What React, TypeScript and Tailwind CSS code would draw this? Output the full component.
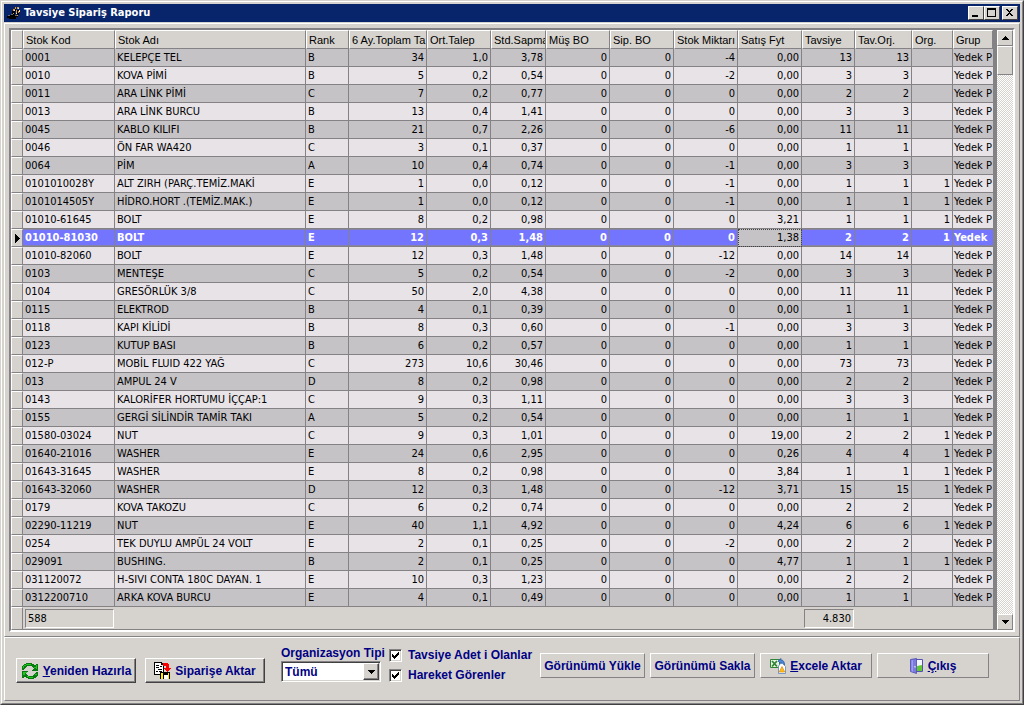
import { useState } from "react";
import type { ReactNode } from "react";
import { clsx } from "clsx";

interface StockRow {
  code: string;
  name: string;
  rank: string;
  // total, average, deviation, customer BO, order BO, stock, price, suggested, original, org
  values: string[];
}

const row = (
  code: string,
  name: string,
  rank: string,
  values: string
): StockRow => ({ code, name, rank, values: values.split(" ") });

const rows: StockRow[] = [
  row("0001", "KELEPÇE TEL", "B", "34 1,0 3,78 0 0 -4 0,00 13 13"),
  row("0010", "KOVA PİMİ", "B", "5 0,2 0,54 0 0 -2 0,00 3 3"),
  row("0011", "ARA LİNK PİMİ", "C", "7 0,2 0,77 0 0 0 0,00 2 2"),
  row("0013", "ARA LİNK BURCU", "B", "13 0,4 1,41 0 0 0 0,00 3 3"),
  row("0045", "KABLO KILIFI", "B", "21 0,7 2,26 0 0 -6 0,00 11 11"),
  row("0046", "ÖN FAR WA420", "C", "3 0,1 0,37 0 0 0 0,00 1 1"),
  row("0064", "PİM", "A", "10 0,4 0,74 0 0 -1 0,00 3 3"),
  row("0101010028Y", "ALT ZIRH (PARÇ.TEMİZ.MAKİ", "E", "1 0,0 0,12 0 0 -1 0,00 1 1 1"),
  row("0101014505Y", "HİDRO.HORT .(TEMİZ.MAK.)", "E", "1 0,0 0,12 0 0 -1 0,00 1 1 1"),
  row("01010-61645", "BOLT", "E", "8 0,2 0,98 0 0 0 3,21 1 1 1"),
  row("01010-81030", "BOLT", "E", "12 0,3 1,48 0 0 0 1,38 2 2 1"),
  row("01010-82060", "BOLT", "E", "12 0,3 1,48 0 0 -12 0,00 14 14"),
  row("0103", "MENTEŞE", "C", "5 0,2 0,54 0 0 -2 0,00 3 3"),
  row("0104", "GRESÖRLÜK 3/8", "C", "50 2,0 4,38 0 0 0 0,00 11 11"),
  row("0115", "ELEKTROD", "B", "4 0,1 0,39 0 0 0 0,00 1 1"),
  row("0118", "KAPI KİLİDİ", "B", "8 0,3 0,60 0 0 -1 0,00 3 3"),
  row("0123", "KUTUP BASI", "B", "6 0,2 0,57 0 0 0 0,00 1 1"),
  row("012-P", "MOBİL FLUID 422 YAĞ", "C", "273 10,6 30,46 0 0 0 0,00 73 73"),
  row("013", "AMPUL 24 V", "D", "8 0,2 0,98 0 0 0 0,00 2 2"),
  row("0143", "KALORİFER HORTUMU İÇÇAP:1", "C", "9 0,3 1,11 0 0 0 0,00 3 3"),
  row("0155", "GERGİ SİLİNDİR TAMİR TAKI", "A", "5 0,2 0,54 0 0 0 0,00 1 1"),
  row("01580-03024", "NUT", "C", "9 0,3 1,01 0 0 0 19,00 2 2 1"),
  row("01640-21016", "WASHER", "E", "24 0,6 2,95 0 0 0 0,26 4 4 1"),
  row("01643-31645", "WASHER", "E", "8 0,2 0,98 0 0 0 3,84 1 1 1"),
  row("01643-32060", "WASHER", "D", "12 0,3 1,48 0 0 -12 3,71 15 15 1"),
  row("0179", "KOVA TAKOZU", "C", "6 0,2 0,74 0 0 0 0,00 2 2"),
  row("02290-11219", "NUT", "E", "40 1,1 4,92 0 0 0 4,24 6 6 1"),
  row("0254", "TEK DUYLU AMPÜL 24 VOLT", "E", "2 0,1 0,25 0 0 -2 0,00 2 2"),
  row("029091", "BUSHING.", "B", "2 0,1 0,25 0 0 0 4,77 1 1 1"),
  row("031120072", "H-SIVI CONTA 180C DAYAN. 1", "E", "10 0,3 1,23 0 0 0 0,00 2 2"),
  row("0312200710", "ARKA KOVA BURCU", "E", "4 0,1 0,49 0 0 0 0,00 1 1"),
];

const columns = [
  { title: "Stok Kod", width: "w-[92px]" },
  { title: "Stok Adı", width: "" },
  { title: "Rank", width: "w-[43px]" },
  { title: "6 Ay.Toplam Ta", width: "w-[78px]" },
  { title: "Ort.Talep", width: "w-16" },
  { title: "Std.Sapma", width: "w-[55px]" },
  { title: "Müş BO", width: "w-16" },
  { title: "Sip. BO", width: "w-16" },
  { title: "Stok Miktarı", width: "w-16" },
  { title: "Satış Fyt", width: "w-16" },
  { title: "Tavsiye", width: "w-[53px]" },
  { title: "Tav.Orj.", width: "w-[57px]" },
  { title: "Org.", width: "w-[41px]" },
  { title: "Grup", width: "w-10" },
];

const PRICE = 6;
const VALUE_COUNT = 10;

const ExcavatorIcon = () => (
  <svg viewBox="0 0 16 16" className="size-4" shapeRendering="crispEdges" aria-hidden="true">
    <path fill="#000" d="M1 11h3v-1h5v1h3v1h-2v2H3v-1H1zM6 6h3v4H6zM9 3h1v3H9zM11 5h2v5h-2z" />
    <path fill="#d89a38" d="M7 4h2v2H7zM9 2h1v2H9zM11 2h2v2h-2zM10 5h1v3h-1zM12 6h1v2h-1zM7 8h1v1H7zM11 10h1v1h-1z" />
    <path fill="#f4e6c0" d="M8 5h1v1H8zM12 3h1v1h-1zM13 5h1v2h-1zM10 8h1v1h-1z" />
    <path fill="#6b6b6b" d="M2 10h2v1H2zM5 9h2v1H5zM9 10h2v1H9z" />
  </svg>
);

const RefreshIcon = () => (
  <svg viewBox="0 0 18 18" className="size-[18px]" shapeRendering="crispEdges" aria-hidden="true">
    <path
      fill="#087a10"
      d="M5 1h6v1h2v1h2V2h2v7h-6V8h1V7h1V6h-1V5h-1V4H6v1H5v1H4v1H3v1H1V4h1V3h1V2h2z"
    />
    <path fill="#21c321" d="M5 2h5v1H5zM3 3h2v1H3zM2 4h1v2H2zM15 3h1v4h-1zM13 5h2v1h-2z" />
    <path
      fill="#087a10"
      d="M13 17H7v-1H5v-1H3v1H1V9h6v1H6v1H5v1h1v1h1v1h5v-1h1v-1h1v-1h1v-1h2v4h-1v1h-1v1h-2z"
    />
    <path fill="#21c321" d="M2 10h4v1H2zM2 11h2v2H2zM6 14h2v1H6zM8 15h4v1H8zM14 12h2v1h-2z" />
  </svg>
);

const TransferIcon = () => (
  <svg viewBox="0 0 17 17" className="size-[17px]" shapeRendering="crispEdges" aria-hidden="true">
    <path d="M0 0h8v1h1v1h1v11H0z" />
    <path fill="#fff" d="M1 1h6v2h2v9H1z" />
    <path d="M2 3h3v1H2zM6 4h2v1H6zM2 5h3v1H2zM4 7h4v1H4zM2 9h2v1H2zM5 9h3v1H5zM7 1h1v2H7z" />
    <path d="M6 10h10v7H6z" />
    <path fill="#ffe700" d="M7 11h2v6H7zM14 11h1v6h-1z" />
    <path fill="#fff" d="M10 13h4v4h-4z" />
    <path fill="#f00" d="M9 1h5v1h1v4h2v1h-1v1h-1v1h-1v1h-1V9h-1V8h-1V7h-1V6h2V4H9z" />
  </svg>
);

const ExcelIcon = () => (
  <svg viewBox="0 0 16 16" className="size-4" aria-hidden="true">
    <path fill="#e8f4e4" stroke="#2f8436" d="M.5 1.500h9v8h-9z" />
    <path stroke="#2f8436" strokeWidth="1.800" d="M2 3l5 5.500M7 3L2 8.500" />
    <path fill="#4b86d8" stroke="#23529c" strokeWidth="0.700" d="M8 3l3-2.500V2c2.500 0 3.500 2 3.500 5h-2C12.500 5 12 4.500 11 4.500V6z" />
    <path fill="#fff" stroke="#5b83c0" strokeWidth="0.800" d="M8.500 8l2-2.500h2l3 3v7h-7z" />
    <path fill="#ffbe1e" stroke="#e08a00" strokeWidth="0.700" d="M12 8.500l2.800 5.500H9.200z" />
  </svg>
);

const ExitIcon = () => (
  <svg viewBox="0 0 14 16" className="h-4 w-3.5" aria-hidden="true">
    <path fill="#f4f6ff" stroke="#5252b4" d="M5.500 1.500h7v12h-7z" />
    <path fill="#62c832" d="M7 8l5-1v6H7z" />
    <path fill="#7b7bde" stroke="#4a4ab0" strokeWidth="0.800" d="M.5 1.500L6.500.5v15L.5 13.500z" />
    <path fill="#9c9cf0" d="M1.500 2.500l1.500-.4v11.700l-1.500-.6z" />
    <path fill="#fff" d="M4.500 8h1v1.500h-1z" />
  </svg>
);

interface CaptionButtonProps {
  label: string;
  path: string;
}

const CaptionButton = ({ label, path }: CaptionButtonProps) => (
  <button
    type="button"
    aria-label={label}
    className="flex h-3.5 w-4 items-center justify-center border border-t-white border-l-white border-r-[#424142] border-b-[#424142] bg-[#d6d3ce]"
  >
    <svg viewBox="0 0 10 10" className="size-2.5" shapeRendering="crispEdges">
      <path d={path} />
    </svg>
  </button>
);

interface ToolButtonProps {
  icon?: ReactNode;
  className?: string;
  deep?: boolean;
  children: ReactNode;
}

const ToolButton = ({ icon, className, deep, children }: ToolButtonProps) => (
  <button
    type="button"
    className={clsx(
      "flex h-[25px] shrink-0 items-center justify-center gap-1 border border-t-white border-l-white whitespace-nowrap",
      deep
        ? "border-r-[#424142] border-b-[#424142] shadow-[inset_-1px_-1px_#848284]"
        : "border-r-[#848284] border-b-[#848284]",
      className
    )}
  >
    {icon}
    <span>{children}</span>
  </button>
);

interface CheckOptionProps {
  label: string;
  checked: boolean;
  onChange: (checked: boolean) => void;
}

const CheckOption = ({ label, checked, onChange }: CheckOptionProps) => (
  <label className="flex h-5 items-center gap-1.5 whitespace-nowrap">
    <span className="grid">
      <input
        type="checkbox"
        checked={checked}
        onChange={(e) => onChange(e.target.checked)}
        className="col-start-1 row-start-1 size-[13px] appearance-none border border-t-[#848284] border-l-[#848284] border-r-white border-b-white bg-white shadow-[inset_1px_1px_#424142,inset_-1px_-1px_#d6d3ce]"
      />
      {checked && (
        <svg
          viewBox="0 0 13 13"
          className="pointer-events-none col-start-1 row-start-1 size-[13px]"
          shapeRendering="crispEdges"
        >
          <path d="M3 5h1v1h1v1h1V6h1V5h1V4h1V3h1v3H9v1H8v1H7v1H6v1H5V9H4V8H3z" />
        </svg>
      )}
    </span>
    {label}
  </label>
);

const ScrollButton = ({ label, path }: CaptionButtonProps) => (
  <button
    type="button"
    aria-label={label}
    className="flex h-4 w-full items-center justify-center border border-t-white border-l-white border-r-[#848284] border-b-[#848284] bg-[#d6d3ce]"
  >
    <svg viewBox="0 0 7 4" className="h-1 w-[7px]" shapeRendering="crispEdges">
      <path d={path} />
    </svg>
  </button>
);

const VerticalScrollbar = () => (
  <div className="flex w-4 shrink-0 flex-col bg-[repeating-conic-gradient(#fff_0_25%,#d6d3ce_0_50%)] bg-size-[2px_2px]">
    <ScrollButton label="Yukarı" path="M3 0h1v1h1v1h1v1h1v1H0V3h1V2h1V1h1z" />
    <div className="h-[29px] border border-t-white border-l-white border-r-[#848284] border-b-[#848284] bg-[#d6d3ce]" />
    <div className="flex-1" />
    <ScrollButton label="Aşağı" path="M0 0h7v1H6v1H5v1H4v1H3V3H2V2H1V1H0z" />
  </div>
);

const lineCell = "h-[18px] overflow-hidden border-r border-b border-[#848284] p-0";

interface GridRowProps {
  data: StockRow;
  striped: boolean;
  selected: boolean;
  onSelect: () => void;
}

const GridRow = ({ data, striped, selected, onSelect }: GridRowProps) => {
  const fill = striped ? "bg-[#c6c3c6]" : "bg-[#e7e3e7]";
  const tone = selected
    ? "bg-[#7375ff] font-bold text-white shadow-[inset_0_1px_#8482a8,inset_0_-1px_#8482a8]"
    : fill;

  return (
    <tr onClick={onSelect}>
      <td className={clsx(lineCell, "border-t border-l border-t-white border-l-white bg-[#d6d3ce]")}>
        {selected && (
          <svg viewBox="0 0 5 9" className="ml-[3px] h-[9px] w-[5px]" shapeRendering="crispEdges">
            <path d="M0 0h1v1h1v1h1v1h1v1h1v1H4v1H3v1H2v1H1v1H0z" />
          </svg>
        )}
      </td>
      {[data.code, data.name, data.rank].map((text, i) => (
        <td key={i} className={clsx(lineCell, tone, "pt-px pl-0.5")}>
          {text}
        </td>
      ))}
      {Array.from({ length: VALUE_COUNT }, (_, i) => (
        <td
          key={i}
          className={clsx(
            lineCell,
            "pt-px pr-0.5 text-right",
            selected && i === PRICE
              ? "bg-[#c6c3c6] outline-1 -outline-offset-1 outline-dotted outline-[#424142]"
              : tone
          )}
        >
          {data.values[i]}
        </td>
      ))}
      <td className={clsx("overflow-hidden border-b border-[#848284] p-0 pt-px pl-px", tone)}>
        {selected ? "Yedek" : "Yedek P"}
      </td>
    </tr>
  );
};

const footerBox =
  "mr-px ml-0.5 h-[19px] border border-t-[#848284] border-l-[#848284] border-r-white border-b-white px-0.5 leading-[18px]";

const StockGrid = () => {
  const [selected, setSelected] = useState("01010-81030");

  return (
    <div className="flex border-2 border-t-[#848284] border-l-[#848284] border-r-white border-b-white">
      <table className="w-full min-w-0 flex-1 table-fixed border-separate border-spacing-0 font-['DejaVu_Sans_Condensed','DejaVu_Sans',sans-serif] text-[11px] leading-4 whitespace-nowrap">
        <colgroup>
          <col className="w-3" />
          {columns.map((c) => (
            <col key={c.title} className={c.width} />
          ))}
        </colgroup>
        <thead className="font-['Liberation_Sans',Arial,sans-serif] text-[11px]">
          <tr>
            <th className="h-[19px] border border-t-white border-l-white border-r-[#848284] border-b-[#848284] p-0" />
            {columns.map((c) => (
              <th
                key={c.title}
                scope="col"
                className="overflow-hidden border border-t-white border-l-white border-r-[#848284] border-b-[#848284] p-0 pl-0.5 text-left font-normal"
              >
                {c.title}
              </th>
            ))}
          </tr>
        </thead>
        <tbody>
          {rows.map((r, i) => (
            <GridRow
              key={r.code}
              data={r}
              striped={i % 2 === 0}
              selected={r.code === selected}
              onSelect={() => setSelected(r.code)}
            />
          ))}
        </tbody>
        <tfoot>
          <tr>
            <td className="h-[23px] border border-t-white border-l-white border-r-[#848284] border-b-[#848284] p-0" />
            <td className="border-b border-[#848284] p-0">
              <div className={footerBox}>588</div>
            </td>
            <td colSpan={9} className="border-b border-[#848284] p-0" />
            <td className="border-b border-[#848284] p-0">
              <div className={clsx(footerBox, "text-right")}>4.830</div>
            </td>
            <td colSpan={3} className="border-b border-[#848284] p-0" />
          </tr>
        </tfoot>
      </table>
      <div className="w-1 shrink-0 bg-[#848284]" />
      <VerticalScrollbar />
    </div>
  );
};

const Toolbar = () => {
  const [org, setOrg] = useState("Tümü");
  const [suggestedOnly, setSuggestedOnly] = useState(true);
  const [movedOnly, setMovedOnly] = useState(true);

  return (
    <div className="flex h-16 items-start border border-t-white border-l-white border-r-[#848284] border-b-[#848284] pl-[11px] text-xs font-bold text-[#000084]">
      <div className="flex gap-[9px] pt-5">
        <ToolButton deep icon={<RefreshIcon />} className="w-[120px]">
          <u>Y</u>eniden Hazırla
        </ToolButton>
        <ToolButton deep icon={<TransferIcon />} className="w-[120px]">
          Siparişe Aktar
        </ToolButton>
      </div>
      <div className="ml-4 flex w-[100px] shrink-0 flex-col pt-[7px] leading-4">
        <label htmlFor="org" className="whitespace-nowrap">
          Organizasyon Tipi
        </label>
        <div className="relative">
          <select
            id="org"
            value={org}
            onChange={(e) => setOrg(e.target.value)}
            className="h-[21px] w-full appearance-none border border-t-[#848284] border-l-[#848284] border-r-white border-b-white bg-white pl-[3px] shadow-[inset_1px_1px_#424142,inset_-1px_-1px_#d6d3ce]"
          >
            <option>Tümü</option>
            <option>Merkez</option>
            <option>Şube</option>
          </select>
          <span className="pointer-events-none absolute top-0.5 right-0.5 flex h-[17px] w-4 items-center justify-center border border-t-white border-l-white border-r-[#424142] border-b-[#424142] bg-[#d6d3ce] shadow-[inset_-1px_-1px_#848284]">
            <svg viewBox="0 0 7 4" className="h-1 w-[7px]" shapeRendering="crispEdges">
              <path d="M0 0h7v1H6v1H5v1H4v1H3V3H2V2H1V1H0z" />
            </svg>
          </span>
        </div>
      </div>
      <div className="flex w-[159px] shrink-0 flex-col pt-[7px] pl-2">
        <CheckOption
          label="Tavsiye Adet i Olanlar"
          checked={suggestedOnly}
          onChange={setSuggestedOnly}
        />
        <CheckOption label="Hareket Görenler" checked={movedOnly} onChange={setMovedOnly} />
      </div>
      <div className="flex gap-[5px] pt-[15px]">
        <ToolButton className="w-[105px]">Görünümü Yükle</ToolButton>
        <ToolButton className="w-[105px]">Görünümü Sakla</ToolButton>
        <ToolButton icon={<ExcelIcon />} className="w-[112px]">
          <u>E</u>xcele Aktar
        </ToolButton>
        <ToolButton icon={<ExitIcon />} className="w-[112px]">
          <u>Ç</u>ıkış
        </ToolButton>
      </div>
    </div>
  );
};

export default function App() {
  return (
    <div className="min-h-screen border border-t-[#d6d3ce] border-l-[#d6d3ce] border-r-[#424142] border-b-[#424142] bg-[#d6d3ce] font-['Liberation_Sans',Arial,sans-serif] text-black">
      <div className="border border-t-white border-l-white border-r-[#848284] border-b-[#848284] p-0.5">
        <header className="flex h-[18px] items-center gap-0.5 bg-[#08246b] px-0.5">
          <ExcavatorIcon />
          <h1 className="flex-1 font-['DejaVu_Sans_Condensed','DejaVu_Sans',sans-serif] text-[11px] leading-4 font-bold text-white">
            Tavsiye Sipariş Raporu
          </h1>
          <div className="flex">
            <CaptionButton label="Simge durumuna küçült" path="M1 7h6v2H1z" />
            <CaptionButton label="Ekranı kapla" path="M0 0h9v9H0zM1 2v6h7V2z" />
            <span className="w-0.5" />
            <CaptionButton
              label="Kapat"
              path="M1 1h2v1h1v1h1V2h1V1h2v1H7v1H6v1H5v1h1v1h1v1h1v1H6V7H5V6H4v1H3v1H1V7h1V6h1V5h1V4H3V3H2V2H1z"
            />
          </div>
        </header>
        <main className="pt-px">
          <div className="border border-t-white border-l-white border-r-[#848284] border-b-[#848284] p-1">
            <StockGrid />
          </div>
          <Toolbar />
        </main>
      </div>
    </div>
  );
}
